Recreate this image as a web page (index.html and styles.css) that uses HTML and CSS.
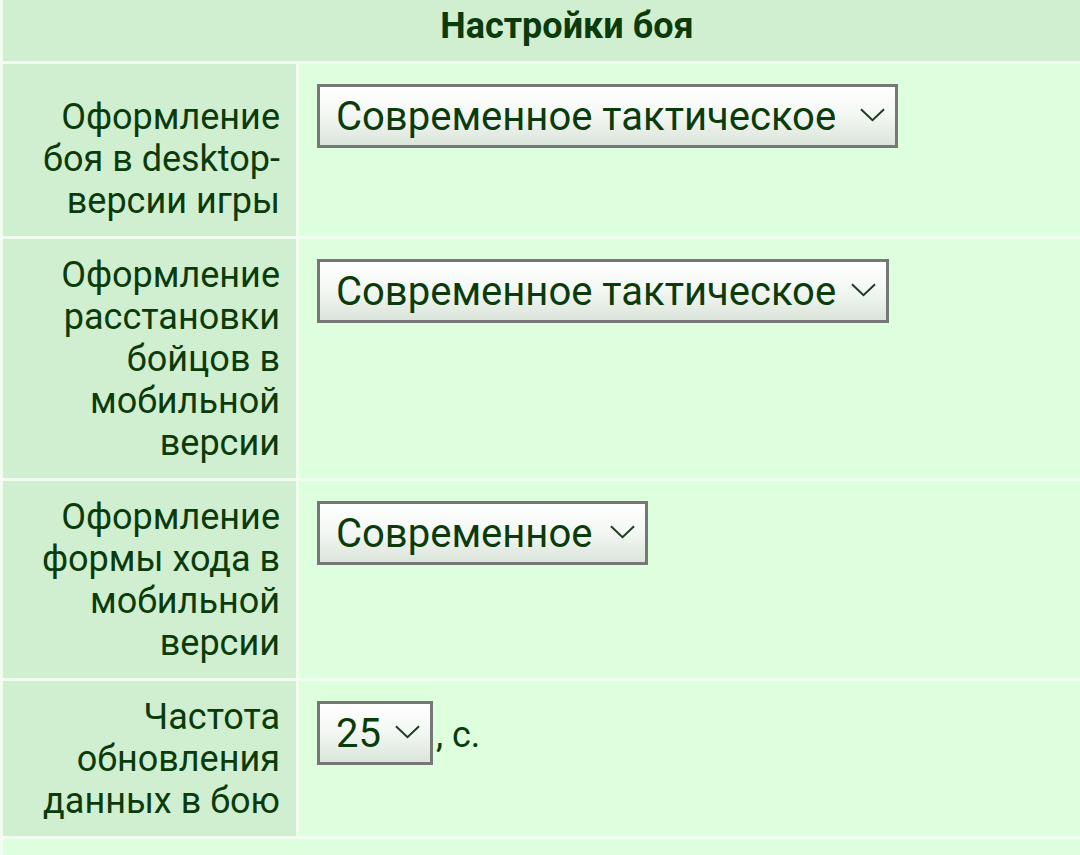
FILE: index.html
```html
<!DOCTYPE html>
<html lang="ru">

<head>
  <meta charset="UTF-8">
  <meta name="viewport" content="width=device-width, initial-scale=1.0">
  <link rel="stylesheet" href="styles.css">
  <title>Настройки боя</title>
</head>

<body>
  <table class="settings">
    <tr>
      <th class="caption" colspan="2">Настройки боя</th>
    </tr>
    <tr class="rowTall">
      <td class="label">Оформление боя в desktop-версии игры</td>
      <td class="value">
        <span class="selectBox w581">
          <select class="select">
            <option>Современное тактическое</option>
            <option>Классическое</option>
          </select>
          <svg class="chevron" viewBox="0 0 26 14"><path d="M1 1 L13 12.5 L25 1" /></svg>
        </span>
      </td>
    </tr>
    <tr>
      <td class="label">Оформление расстановки бойцов в мобильной версии</td>
      <td class="value">
        <span class="selectBox w572">
          <select class="select">
            <option>Современное тактическое</option>
            <option>Классическое</option>
          </select>
          <svg class="chevron" viewBox="0 0 26 14"><path d="M1 1 L13 12.5 L25 1" /></svg>
        </span>
      </td>
    </tr>
    <tr>
      <td class="label">Оформление формы хода в мобильной версии</td>
      <td class="value">
        <span class="selectBox w331">
          <select class="select">
            <option>Современное</option>
            <option>Классическое</option>
          </select>
          <svg class="chevron" viewBox="0 0 26 14"><path d="M1 1 L13 12.5 L25 1" /></svg>
        </span>
      </td>
    </tr>
    <tr>
      <td class="label">Частота обновления данных в бою</td>
      <td class="value">
        <span class="selectBox w116">
          <select class="select">
            <option>25</option>
            <option>10</option>
            <option>60</option>
          </select>
          <svg class="chevron" viewBox="0 0 26 14"><path d="M1 1 L13 12.5 L25 1" /></svg>
        </span><span class="unit">, с.</span>
      </td>
    </tr>
    <tr>
      <td class="footer" colspan="2"></td>
    </tr>
  </table>
</body>

</html>
```

FILE: styles.css
```css
* {
  margin: 0;
  padding: 0;
  box-sizing: border-box;
}

body {
  overflow: hidden;
  background-color: #effeef;
  font-family: Roboto, "Noto Sans", sans-serif;
  font-size: 36px;
  color: #0b3b0b;
}

.settings {
  width: 1134px;
  margin-top: -3px;
  border-collapse: separate;
  border-spacing: 3px;
}

.settings .caption {
  height: 61px;
  padding: 5px 0 14px;
  background-color: #d0eed0;
  font-size: 36px;
  line-height: 42px;
  font-weight: bold;
  text-align: center;
}

.settings .rowTall {
  height: 172px;
}

.settings .label {
  width: 293px;
  padding: 15px 16px 14px 15px;
  background-color: #d0eed0;
  text-align: right;
  vertical-align: bottom;
}

.settings .value {
  padding: 20px 18px 12px;
  background-color: #ddffdd;
  vertical-align: top;
}

.settings .footer {
  height: 40px;
  background-color: #ddffdd;
}

.selectBox {
  position: relative;
  display: inline-flex;
  vertical-align: baseline;
}

.selectBox .select {
  width: 100%;
  height: 64px;
  padding: 0 50px 0 16px;
  border: 3px solid #777;
  border-radius: 0;
  background: linear-gradient(#fff, #f4f8f4 45%, #dbe5db);
  font-family: inherit;
  font-size: 40px;
  color: #0b3b0b;
  -webkit-appearance: none;
  appearance: none;
}

.selectBox .chevron {
  position: absolute;
  right: 13px;
  top: 24px;
  width: 25px;
  height: 14px;
  fill: none;
  stroke: #1c3a1c;
  stroke-width: 2;
  pointer-events: none;
}

.unit {
  margin-left: 3px;
}

.w581 {
  width: 581px;
}

.w572 {
  width: 572px;
}

.w331 {
  width: 331px;
}

.w116 {
  width: 116px;
}
```
